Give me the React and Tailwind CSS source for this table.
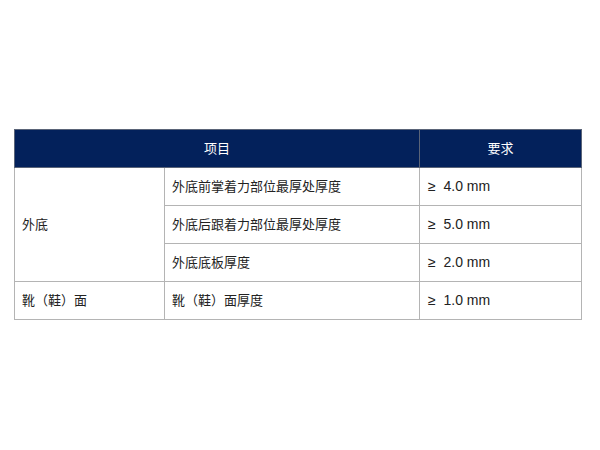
const rows = [
  { part: "外底", item: "外底前掌着力部位最厚处厚度", req: "≥  4.0 mm", span: 3 },
  { item: "外底后跟着力部位最厚处厚度", req: "≥  5.0 mm" },
  { item: "外底底板厚度", req: "≥  2.0 mm" },
  { part: "靴（鞋）面", item: "靴（鞋）面厚度", req: "≥  1.0 mm", span: 1 },
];

export default function App() {
  return (
    <div
      className="w-[600px] h-[450px] bg-white pt-[129px] pl-[14px]"
      style={{ fontFamily: '"Noto Sans", "Noto Sans CJK SC", sans-serif' }}
    >
      <table className="w-[567px] border-collapse text-[13px] text-[#222] table-fixed">
        <colgroup>
          <col className="w-[150px]" />
          <col className="w-[255px]" />
          <col className="w-[162px]" />
        </colgroup>
        <thead>
          <tr className="h-[38px] bg-[#03215b] text-white">
            <th colSpan={2} className="font-normal text-center border border-[#5a6478]">
              项目
            </th>
            <th className="font-normal text-center border border-[#5a6478]">要求</th>
          </tr>
        </thead>
        <tbody>
          {rows.map((r, i) => (
            <tr key={i} className="h-[38px]">
              {r.part && (
                <td rowSpan={r.span} className="border border-[#b4b4b4] pl-[7px] align-middle">
                  {r.part}
                </td>
              )}
              <td className="border border-[#b4b4b4] pl-[7px]">{r.item}</td>
              <td className="border border-[#b4b4b4] pl-[8px] whitespace-pre font-['Liberation_Sans',sans-serif] text-[14px]">
                {r.req}
              </td>
            </tr>
          ))}
        </tbody>
      </table>
    </div>
  );
}
